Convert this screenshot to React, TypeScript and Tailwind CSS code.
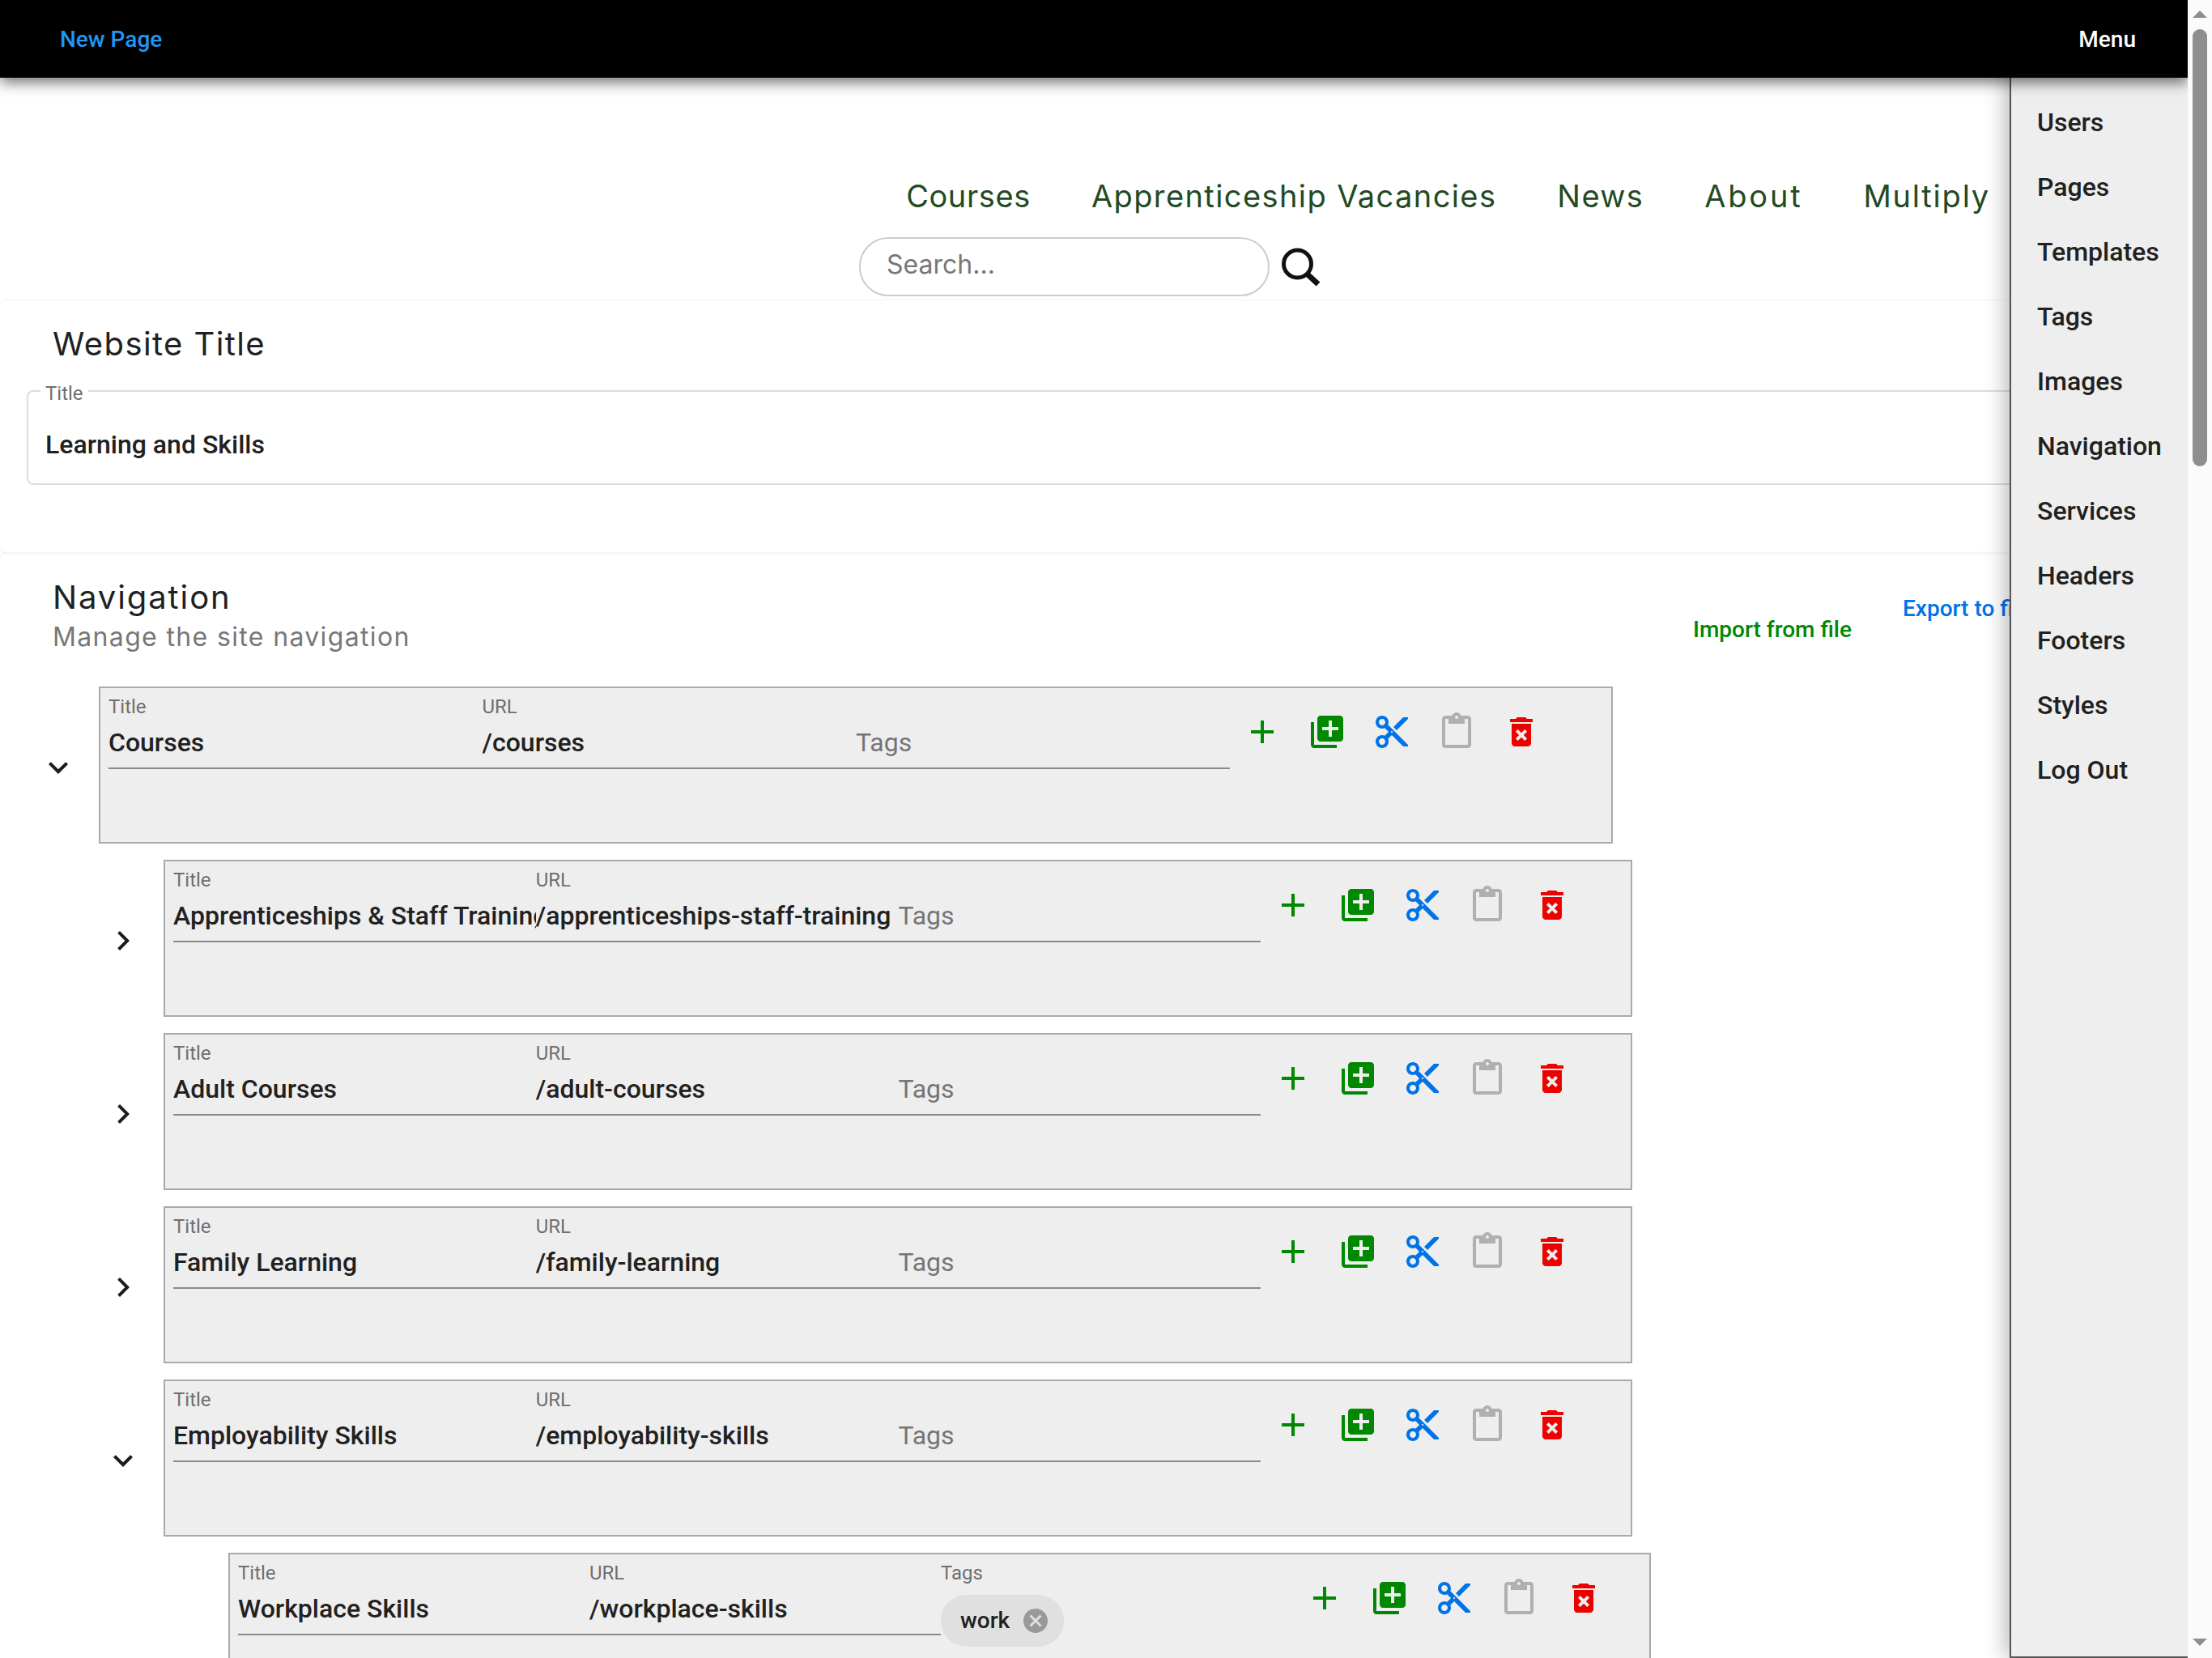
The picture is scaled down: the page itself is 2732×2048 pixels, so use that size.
import React from "react";

const ICONS = {
  plus: "M19 13h-6v6h-2v-6H5v-2h6V5h2v6h6v2z",
  libraryAdd:
    "M4 6H2v14c0 1.1.9 2 2 2h14v-2H4V6zm16-4H8c-1.1 0-2 .9-2 2v12c0 1.1.9 2 2 2h12c1.1 0 2-.9 2-2V4c0-1.1-.9-2-2-2zm-1 9h-4v4h-2v-4H9V9h4V5h2v4h4v2z",
  cut: "M9.64 7.64c.23-.5.36-1.05.36-1.64 0-2.21-1.79-4-4-4S2 3.79 2 6s1.79 4 4 4c.59 0 1.14-.13 1.64-.36L10 12l-2.36 2.36C7.14 14.13 6.59 14 6 14c-2.21 0-4 1.79-4 4s1.79 4 4 4 4-1.79 4-4c0-.59-.13-1.14-.36-1.64L12 14l7 7h3v-1L9.64 7.64zM6 8c-1.1 0-2-.89-2-2s.9-2 2-2 2 .89 2 2-.9 2-2 2zm0 12c-1.1 0-2-.89-2-2s.9-2 2-2 2 .89 2 2-.9 2-2 2zm6-7.5c-.28 0-.5-.22-.5-.5s.22-.5.5-.5.5.22.5.5-.22.5-.5.5zM19 3l-6 6 2 2 7-7V3z",
  paste:
    "M19 2h-4.18C14.4.84 13.3 0 12 0c-1.3 0-2.4.84-2.82 2H5c-1.1 0-2 .9-2 2v16c0 1.1.9 2 2 2h14c1.1 0 2-.9 2-2V4c0-1.1-.9-2-2-2zm-7 0c.55 0 1 .45 1 1s-.45 1-1 1-1-.45-1-1 .45-1 1-1zm7 18H5V4h2v3h10V4h2v16z",
  remove:
    "M6 19c0 1.1.9 2 2 2h8c1.1 0 2-.9 2-2V7H6v12zm2.46-7.12l1.41-1.41L12 12.59l2.12-2.12 1.41 1.41L13.41 14l2.12 2.12-1.41 1.41L12 15.41l-2.12 2.12-1.41-1.41L10.59 14l-2.13-2.12zM15.5 4l-1-1h-5l-1 1H5v2h14V4z",
  expand: "M16.59 8.59L12 13.17 7.41 8.59 6 10l6 6 6-6z",
  chevron: "M10 6L8.59 7.41 13.17 12l-4.58 4.59L10 18l6-6z",
  cancel:
    "M12 2C6.47 2 2 6.47 2 12s4.47 10 10 10 10-4.47 10-10S17.53 2 12 2zm5 13.59L15.59 17 12 13.41 8.41 17 7 15.59 10.59 12 7 8.41 8.41 7 12 10.59 15.59 7 17 8.41 13.41 12 17 15.59z",
};

function Icon({ d, className }: { d: string; className?: string }) {
  return (
    <svg viewBox="0 0 24 24" fill="currentColor" className={className}>
      <path d={d} />
    </svg>
  );
}

const MENU = ["Users", "Pages", "Templates", "Tags", "Images", "Navigation", "Services", "Headers", "Footers", "Styles", "Log Out"];
const SITE_NAV = [
  { label: "Courses", track: "tracking-[0.6px]" },
  { label: "Apprenticeship Vacancies", track: "tracking-[1.4px]" },
  { label: "News", track: "tracking-[1.4px]" },
  { label: "About", track: "tracking-[2.8px]" },
  { label: "Multiply", track: "tracking-[1.8px]" },
];

// one entry per nesting depth
const LEVELS = [
  { row: "pl-[48px]", box: "w-[1870px]", col: "w-[461.5px]" },
  { row: "pl-[128px]", box: "w-[1814px]", col: "w-[447.7px]" },
  { row: "pl-[208px]", box: "w-[1757px]", col: "w-[434px]" },
];

const ROWS = [
  { level: 0, title: "Courses", url: "/courses", open: true },
  { level: 1, title: "Apprenticeships & Staff Training", url: "/apprenticeships-staff-training" },
  { level: 1, title: "Adult Courses", url: "/adult-courses" },
  { level: 1, title: "Family Learning", url: "/family-learning" },
  { level: 1, title: "Employability Skills", url: "/employability-skills", open: true },
  { level: 2, title: "Workplace Skills", url: "/workplace-skills", leaf: true, tag: "work" },
];

function Field({ label, value, col }: { label: string; value: string; col: string }) {
  return (
    <div className={`${col} shrink-0 h-[97px] border-b-2 border-[#8a8a8a]`}>
      <div className="text-[24px] leading-[28px] text-[#6f6f6f] h-[46px] pt-[6px]">{label}</div>
      <div className="text-[32px] leading-[36px] font-medium text-[#212121] whitespace-nowrap overflow-hidden h-[49px]">{value}</div>
    </div>
  );
}

function NavRow({ level, title, url, open, leaf, tag }: { level: number; title: string; url: string; open?: boolean; leaf?: boolean; tag?: string }) {
  const lv = LEVELS[level];
  return (
    <div className={`${lv.row} flex items-center h-[194px] mb-[20px]`}>
      {leaf ? (
        <div className="w-[48px] h-[48px] shrink-0 mr-[26px]" />
      ) : (
        <Icon d={open ? ICONS.expand : ICONS.chevron} className="w-[48px] h-[48px] mt-[6px] text-[#1c1c1c] shrink-0 mr-[26px]" />
      )}
      <div className={`${lv.box} h-[194px] bg-[#eeeeee] border-2 border-[#aaaaaa] pl-[10px] pt-[3px] flex items-start shrink-0`}>
        <Field label="Title" value={title} col={lv.col} />
        <Field label="URL" value={url} col={lv.col} />
        {tag ? (
          <div className={`${lv.col} shrink-0 h-[97px]`}>
            <div className="text-[24px] leading-[28px] text-[#6f6f6f] h-[46px] pt-[6px]">Tags</div>
            <div className="inline-flex items-center h-[64px] rounded-full bg-[#e0e0e0] pl-[24px] pr-[17px] mt-[1px]">
              <span className="text-[28px] font-medium text-[#212121] mr-[14px]">{tag}</span>
              <Icon d={ICONS.cancel} className="w-[36px] h-[36px] text-[#999999]" />
            </div>
          </div>
        ) : (
          <div className={`${lv.col} shrink-0 h-[97px] border-b-2 border-[#8a8a8a] pt-[46px]`}>
            <div className="text-[32px] leading-[36px] text-[#757575]">Tags</div>
          </div>
        )}
        <div className="flex pt-[27px]">
          <ActionIcon d={ICONS.plus} color="text-[#008800]" />
          <ActionIcon d={ICONS.libraryAdd} color="text-[#008800]" />
          <ActionIcon d={ICONS.cut} color="text-[#0073e6]" />
          <ActionIcon d={ICONS.paste} color="text-[#b0b0b0]" />
          <ActionIcon d={ICONS.remove} color="text-[#ee0000]" />
        </div>
      </div>
    </div>
  );
}

function ActionIcon({ d, color }: { d: string; color: string }) {
  return (
    <div className="w-[80px] flex justify-center">
      <Icon d={d} className={`w-[48px] h-[48px] ${color}`} />
    </div>
  );
}

export default function App() {
  return (
    <div className="h-screen overflow-hidden flex bg-white font-['Roboto',sans-serif]">
      <div className="flex-1 min-w-0 relative overflow-hidden">
        <header className="relative z-20 h-[96px] bg-black flex items-center justify-between pl-[74px] pr-[64px] pt-[1px] text-[28px] font-medium shadow-[0_6px_16px_rgba(0,0,0,0.55)]">
          <span className="text-[#2196f3]">New Page</span>
          <span className="text-white">Menu</span>
        </header>

        <aside className="absolute top-0 right-0 bottom-0 z-10 w-[220px] pt-[111px] pl-[32px] bg-[#eeeeee] border-l-2 border-b-2 border-[#555555] shadow-[-4px_0_26px_rgba(0,0,0,0.3)]">
          {MENU.map((item) => (
            <div key={item} className="h-[80px] flex items-center text-[32px] font-medium text-[#212121]">
              {item}
            </div>
          ))}
        </aside>

        <main className="font-['Inter',sans-serif]">
          <nav className="flex justify-end gap-[75px] pr-[244px] pt-[120px] h-[197px] text-[38px] leading-[52px] text-[#234a23]">
            {SITE_NAV.map((item) => (
              <span key={item.label} className={item.track}>{item.label}</span>
            ))}
          </nav>
          <div className="flex items-center pl-[1061px] h-[73px] mb-[5px]">
            <div className="w-[507px] h-[73px] rounded-[36px] border-2 border-[#cccccc] pl-[32px] pb-[6px] flex items-center text-[32px] text-[#777777]">
              Search...
            </div>
            <svg viewBox="0 0 50 50" className="w-[50px] h-[50px] ml-[14px] text-[#111111]" fill="none" stroke="currentColor">
              <circle cx="20.5" cy="21" r="17" strokeWidth="5" />
              <path d="M33 34 L46 46" strokeWidth="7" />
            </svg>
          </div>

          <section className="h-[312px] rounded-[8px] shadow-[0_0_3px_rgba(0,0,0,0.1)] pl-[33px]">
            <h2 className="pl-[32px] pt-[29px] h-[111px] text-[40px] tracking-[1.4px] leading-[50px] text-[#212121]">Website Title</h2>
            <div className="relative h-[117px] border-2 border-[#dddddd] rounded-[8px] pl-[21px] pt-[47px]">
              <span className="absolute left-[15px] -top-[12px] bg-white px-[6px] text-[24px] leading-[28px] text-[#6f6f6f] font-['Roboto',sans-serif]">Title</span>
              <div className="text-[32px] leading-[36px] font-medium text-[#212121] font-['Roboto',sans-serif]">Learning and Skills</div>
            </div>
          </section>

          <section className="rounded-[8px] shadow-[0_0_3px_rgba(0,0,0,0.1)] pt-[30px]">
            <div className="flex h-[135px] pl-[65px]">
              <div className="w-[2026px] shrink-0">
                <h2 className="text-[40px] tracking-[1.9px] leading-[49px] text-[#212121]">Navigation</h2>
                <p className="text-[32px] tracking-[1.35px] leading-[50px] text-[#777777]">Manage the site navigation</p>
              </div>
              <span className="pt-[48px] text-[28px] font-medium leading-[34px] text-[#008800] font-['Roboto',sans-serif] w-[259px] shrink-0">Import from file</span>
              <span className="pt-[22px] text-[28px] font-medium leading-[34px] text-[#0073e6] font-['Roboto',sans-serif] whitespace-nowrap">Export to file</span>
            </div>
            <div className="font-['Roboto',sans-serif]">
              {ROWS.map((r) => (
                <NavRow key={r.title} {...r} />
              ))}
            </div>
          </section>
        </main>
      </div>

      <div className="w-[30px] shrink-0 bg-[#fbfbfb] px-[6px] flex flex-col items-center">
        <svg viewBox="0 0 18 9" className="w-[18px] h-[9px] mt-[13px] text-[#8e8e8e]" fill="currentColor">
          <path d="M9 0 L18 9 L0 9 Z" />
        </svg>
        <div className="w-[18px] h-[540px] mt-[14px] rounded-t-[9px] rounded-b-[9px] bg-[#8e8e8e]" />
        <svg viewBox="0 0 18 9" className="w-[18px] h-[9px] mt-auto mb-[15px] text-[#8e8e8e]" fill="currentColor">
          <path d="M0 0 L18 0 L9 9 Z" />
        </svg>
      </div>
    </div>
  );
}
